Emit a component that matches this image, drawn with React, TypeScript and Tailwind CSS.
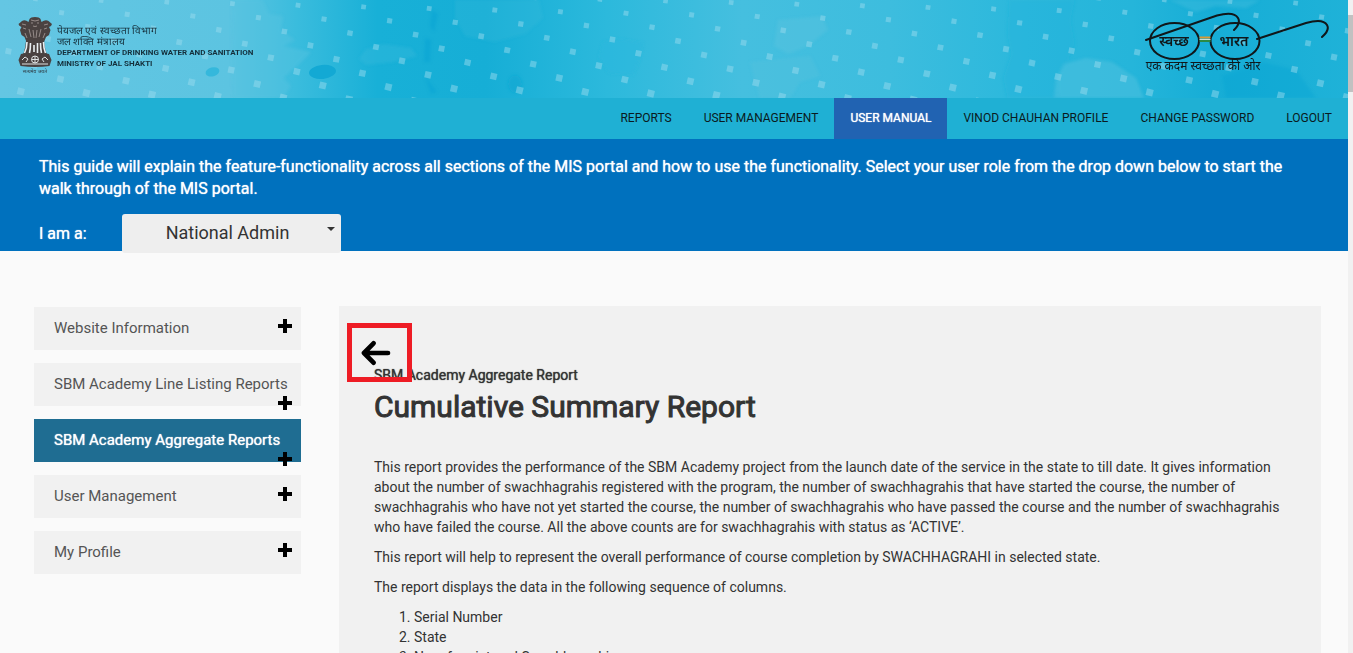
const navItems = [
  { label: "REPORTS" },
  { label: "USER MANAGEMENT" },
  { label: "USER MANUAL", active: true },
  { label: "VINOD CHAUHAN PROFILE" },
  { label: "CHANGE PASSWORD" },
  { label: "LOGOUT" },
];

const sections = [
  { label: "Website Information" },
  { label: "SBM Academy Line Listing Reports", wraps: true },
  { label: "SBM Academy Aggregate Reports", active: true, wraps: true },
  { label: "User Management" },
  { label: "My Profile" },
];

const columns = ["Serial Number", "State", "No. of registered Swachhagrahis"];

// Slanted lattice of small translucent tiles over the banner; they grow downwards.
function tiles() {
  const out: { x: number; y: number; size: number; angle: number }[] = [];
  for (let i = -8; i < 20; i++) {
    for (let j = -4; j < 10; j++) {
      const x = 298 + i * 65.6 + j * 26;
      const y = 5.3 + i * 1.6 + j * 13.9;
      if (x > -8 && x < 1356 && y > -6 && y < 104) {
        out.push({ x, y, size: 4.6 + (y / 98) * 2.4, angle: 8 + (y / 98) * 6 });
      }
    }
  }
  return out;
}

function BannerArt() {
  return (
    <svg className="absolute inset-0 h-full w-full" viewBox="0 0 1348 98" preserveAspectRatio="xMinYMid slice" aria-hidden="true">
      <defs>
        <linearGradient id="water">
          <stop offset="0" stopColor="#64c6e3" />
          <stop offset="0.17" stopColor="#5cc4e1" />
          <stop offset="0.22" stopColor="#3abcdd" />
          <stop offset="0.28" stopColor="#18b0d7" />
          <stop offset="0.36" stopColor="#16aed6" />
          <stop offset="0.45" stopColor="#2cb9dc" />
          <stop offset="0.55" stopColor="#45bfdf" />
          <stop offset="0.66" stopColor="#3dbdde" />
          <stop offset="0.76" stopColor="#2bb8dc" />
          <stop offset="0.84" stopColor="#25b5da" />
          <stop offset="0.9" stopColor="#16add6" />
          <stop offset="1" stopColor="#1fb2d8" />
        </linearGradient>
        <filter id="soft" x="-10%" y="-20%" width="120%" height="140%">
          <feGaussianBlur stdDeviation="1.6" />
        </filter>
      </defs>
      <rect width="1348" height="98" fill="url(#water)" />
      <g filter="url(#soft)">
        <path d="M232 0h30l7 14 14 2-2 14 14 10-12 6 28 6-14 14-14 12 8 8-8 12h-50z" fill="#58c3e0" opacity=".45" />
        <path d="M365 50l18-6 28 4 6 8-24 6-26 3-8-6z" fill="#3fbedd" opacity=".3" />
        <path d="M425 38l6 2-1 22h-6zM425 76l12 16-6 2zM432 10l6 4-4 18-4-6z" fill="#049ed0" opacity=".35" />
        <path d="M455 0h84l4 18-18 16-30 8-30-6-10-18z" fill="#38bcdc" opacity=".25" />
        <ellipse cx="515" cy="84" rx="7" ry="9" fill="#0ea6d2" opacity=".6" />
        <path d="M603 42l18-3 22 4-4 18-6 14-24-2-10-16z" fill="#29b7de" opacity=".5" />
        <path d="M778 20l44-4 6 14-20 16-20 8-14-8z" fill="#5cc4df" opacity=".4" />
        <path d="M750 62l60-6 10 20-20 6-10 16h-30z" fill="#5cc4df" opacity=".3" />
        <path d="M1009 0h66l-4 20 4 24-8 20-10 10 2 24h-52l-4-20 8-24-4-20z" fill="#17b0da" opacity=".25" />
        <path d="M1064 64l22-6 26 4 24 16 8 20h-90l2-18z" fill="#57c3df" opacity=".45" />
        <path d="M1222 76l40-14 34 8 20 28h-90z" fill="#049fd0" opacity=".3" />
        <path d="M1170 0h90l-14 8-30-2-20 6z" fill="#45bfdf" opacity=".4" />
      </g>
      <ellipse cx="322.500" cy="72" rx="13.500" ry="7" fill="#13a9d4" transform="rotate(-6 322 72)" />
      <ellipse cx="212.500" cy="72" rx="7" ry="4.500" fill="#35b8dc" transform="rotate(-15 212 72)" />
      {tiles().map((t, n) => (
        <rect key={n} x={t.x - t.size / 2} y={t.y - t.size / 2} width={t.size} height={t.size} fill="#9bdcee" opacity=".48" transform={`rotate(${t.angle} ${t.x} ${t.y})`} />
      ))}
    </svg>
  );
}

function Emblem() {
  return (
    <svg className="h-[58px] w-[36px]" viewBox="0 0 36 58" role="img" aria-label="State emblem">
      <g fill="#4a4241">
        <path d="M12.500 3q1-2 5.500-2t5.500 2l1 3q4-3 7-1l3.500 3-1 2-2 1 1.500 3-1.500 5-3 2-2 5H9.500l-2-5-3-2L3 14l1.500-3-2-1-1-2L5 5q3-2 6.500 1z" />
        <path d="M9 25h18l1 7 2 7H6l2-7z" />
        <path d="M4 38q14-4 28 0l2.500 6-2 6q-14 2-29 0l-2-6z" />
      </g>
      <g fill="none" stroke="#b5a9a6" strokeWidth="1" opacity=".7">
        <path d="M14 4q4 2 8 0M14 7h2M20 7h2M16 10q2 1 4 0M5 8l4 1M27 9l4-1M6 12l3 1M27 13l3-1M12 13l2 8M24 13l-2 8M16 14l1 8M20 14l-1 8M8 17l2 5M28 17l-2 5" />
      </g>
      <g fill="none" stroke="#e9eff2" strokeWidth="1.600">
        <path d="M10 26q0 6-2.500 11M13.500 27q0 6-1 10M17 29v7M20.500 27v10M23.500 27q0 6 1 10M26.500 26q0 6 2 11" />
      </g>
      <g fill="none" stroke="#dfe2e3" strokeWidth="1">
        <circle cx="18" cy="43.500" r="3.500" />
        <path d="M18 40v7M14.500 43.500h7M5 44l3-3 3 2-2 3M31 44l-3-3-3 2 2 3M5 48h26" />
      </g>
      <text x="18" y="57" textAnchor="middle" fontSize="5" fill="#2d3a42" className="font-['Noto_Sans',sans-serif]">सत्यमेव जयते</text>
    </svg>
  );
}

function SwachhLogo() {
  return (
    <svg className="h-[64px] w-[190px]" viewBox="0 0 190 64" role="img" aria-label="स्वच्छ भारत">
      <g fill="none" stroke="#10171a" strokeWidth="2" strokeLinecap="round">
        <ellipse cx="34.500" cy="29" rx="24.500" ry="18" />
        <ellipse cx="95" cy="29" rx="24.500" ry="18" />
        <path d="M6 28L77 3.500Q94-1 98 6Q101 11 94 18" />
        <path d="M117 27L166 11Q183 6 187 13Q190 18 182 25" />
      </g>
      <path d="M59.500 25.500h11" stroke="#d69a35" strokeWidth="2" />
      <path d="M59.500 27.500h11" stroke="#c9dfd8" strokeWidth="1" />
      <path d="M59.500 29h11" stroke="#2b8a45" strokeWidth="2" />
      <g fill="#10171a" textAnchor="middle" className="font-['Noto_Sans',sans-serif]">
        <text x="34" y="34" fontSize="14" fontWeight="600">स्वच्छ</text>
        <text x="94" y="34" fontSize="14" fontWeight="600">भारत</text>
        <text x="63" y="58" fontSize="12">एक कदम स्वच्छता की ओर</text>
      </g>
    </svg>
  );
}

export default function App() {
  return (
    <div className="flex h-screen overflow-hidden bg-[#fafafa] font-[Roboto,sans-serif] text-[#333]">
      <div className="min-w-0 flex-1 overflow-hidden">
        <header className="relative h-[98px] overflow-hidden">
          <BannerArt />
          <div className="relative flex items-start justify-between pr-[18px] pl-[17px]">
            <div className="flex gap-1 pt-4">
              <Emblem />
              <div className="pt-[9px] text-[10px] leading-[11px] text-[#15303c]">
                <p className="font-medium">पेयजल एवं स्वच्छता विभाग</p>
                <p className="font-medium">जल शक्ति मंत्रालय</p>
                <p className="text-[8px] leading-[11px] font-bold">DEPARTMENT OF DRINKING WATER AND SANITATION</p>
                <p className="text-[8px] leading-[11px] font-bold">MINISTRY OF JAL SHAKTI</p>
              </div>
            </div>
            <div className="pt-3">
              <SwachhLogo />
            </div>
          </div>
        </header>

        <nav className="flex justify-end bg-[#1fb0d4] text-[12px] leading-[17px] text-[#0a1a20]">
          {navItems.map((item) => (
            <a
              key={item.label}
              href="#"
              className={item.active ? "bg-[#2163b2] px-4 py-3 text-white [text-shadow:0_0_1px_currentColor]" : "px-4 py-3"}
            >
              {item.label}
            </a>
          ))}
        </nav>

        <section className="h-[112px] bg-[#0071be] px-[39px] pt-[17px] text-[16px] leading-[22px] text-white [text-shadow:0_0_1px_currentColor]">
          <p>
            This guide will explain the feature-functionality across all sections of the MIS portal and how to use the functionality. Select your user role from the drop down below to start the walk through of the MIS portal.
          </p>
          <div className="flex items-center pt-[14px]">
            <label htmlFor="role" className="w-[83px]">I am a:</label>
            <div className="relative">
              <select id="role" className="h-[39px] w-[219px] appearance-none rounded-[3px] bg-[#eee] pr-2 pb-[2px] text-center text-[18px] text-[#333] [text-shadow:none]">
                <option>National Admin</option>
              </select>
              <span className="pointer-events-none absolute top-[13px] right-[6px] border-x-4 border-t-4 border-x-transparent border-t-[#333]" />
            </div>
          </div>
        </section>

        <main className="flex gap-[38px] pt-[55px] pr-[27px] pl-[34px]">
          <ul className="flex w-[267px] shrink-0 flex-col gap-[13px] pt-px">
            {sections.map((s) => (
              <li key={s.label}>
                <button
                  type="button"
                  className={
                    s.active
                      ? "relative block h-[43px] w-full bg-[#1f6d92] pl-5 text-left text-[15px] text-white [text-shadow:0_0_1px_currentColor]"
                      : "relative block h-[43px] w-full bg-[#f1f1f1] pl-5 text-left text-[15px] text-[#555]"
                  }
                >
                  {s.label}
                  <svg
                    className={s.wraps ? "absolute top-[33px] right-[9px] h-[14px] w-[14px]" : "absolute top-3 right-[9px] h-[14px] w-[14px]"}
                    viewBox="0 0 14 14"
                    aria-hidden="true"
                  >
                    <path d="M5 0h4v5h5v4H9v5H5V9H0V5h5z" fill="#000" />
                  </svg>
                </button>
              </li>
            ))}
          </ul>

          <article className="relative min-w-0 flex-1 bg-[#f1f1f1] px-[35px] pt-[59px] text-[14px] leading-5">
            <button
              type="button"
              aria-label="Back"
              className="absolute top-[17px] left-2 flex h-[59px] w-[65px] items-center justify-center border-5 border-[#ee1c25] pr-[7px] text-black"
            >
              <svg className="h-[26px] w-[30px] shrink-0" viewBox="0 0 30 26" fill="none" stroke="currentColor" strokeWidth="4.700" strokeLinecap="round" strokeLinejoin="round" aria-hidden="true">
                <path d="M12.500 3.300L3 13l9.500 9.700M3.500 13h23.500" />
              </svg>
            </button>
            <p className="[text-shadow:0_0_1px_currentColor]">SBM Academy Aggregate Report</p>
            <h1 className="pt-[5px] text-[30px] leading-[34px] font-normal [-webkit-text-stroke:1px]">Cumulative Summary Report</h1>
            <div className="flex flex-col gap-[10px] pt-[33px]">
              <p>
                This report provides the performance of the SBM Academy project from the launch date of the service in the state to till date. It gives information about the number of swachhagrahis registered with the program, the number of swachhagrahis that have started the course, the number of swachhagrahis who have not yet started the course, the number of swachhagrahis who have passed the course and the number of swachhagrahis who have failed the course. All the above counts are for swachhagrahis with status as ‘ACTIVE’.
              </p>
              <p>This report will help to represent the overall performance of course completion by SWACHHAGRAHI in selected state.</p>
              <p>The report displays the data in the following sequence of columns.</p>
              <ol className="list-decimal pl-10">
                {columns.map((c) => (
                  <li key={c}>{c}</li>
                ))}
              </ol>
            </div>
          </article>
        </main>
      </div>
      <div className="w-[5px] shrink-0 bg-[#f1f1f1] pt-[15px]">
        <div className="h-[77px] bg-[#c1c1c1]" />
      </div>
    </div>
  );
}
